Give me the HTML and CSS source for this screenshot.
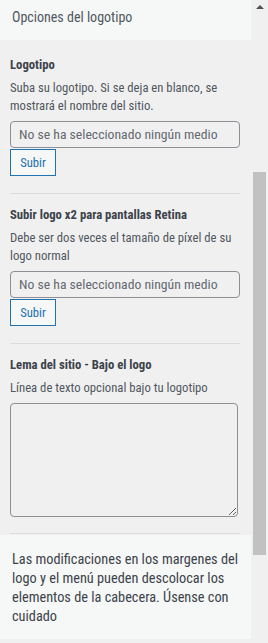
FILE: index.html
```html
<!DOCTYPE html>
<html lang="es">
<head>
<meta charset="utf-8">
<link rel="stylesheet" href="styles.css">
</head>
<body>
<div class="frame">
  <div class="panel">
    <div class="head">Opciones del logotipo</div>
    <div class="body">
      <div class="control">
        <div class="title">Logotipo</div>
        <div class="desc">Suba su logotipo. Si se deja en blanco, se mostrará el nombre del sitio.</div>
        <div class="media">No se ha seleccionado ningún medio</div>
        <button class="btn">Subir</button>
      </div>
      <div class="control">
        <div class="title">Subir logo x2 para pantallas Retina</div>
        <div class="desc">Debe ser dos veces el tamaño de píxel de su logo normal</div>
        <div class="media">No se ha seleccionado ningún medio</div>
        <button class="btn">Subir</button>
      </div>
      <div class="control last">
        <div class="title">Lema del sitio - Bajo el logo</div>
        <div class="desc">Línea de texto opcional bajo tu logotipo</div>
        <textarea class="area"></textarea>
      </div>
    </div>
    <div class="note">Las modificaciones en los margenes del logo y el menú pueden descolocar los elementos de la cabecera. Úsense con cuidado</div>
  </div>
  <div class="scrollbar">
    <div class="arrow"></div>
    <div class="thumb"></div>
  </div>
</div>
</body>
</html>
```

FILE: styles.css
```css
* { box-sizing: border-box; }
html, body { margin: 0; padding: 0; }
body {
  width: 268px;
  height: 643px;
  overflow: hidden;
  background: #f0f0f1;
  font-family: "Roboto Condensed", Lato, sans-serif;
  color: #50575e;
}
.frame { display: flex; height: 643px; }
.panel { width: 251px; flex-shrink: 0; }
.head {
  height: 40px;
  background: #f6f7f7;
  padding: 8px 12px 0;
  font-size: 14px;
  line-height: 18px;
  color: #50575e;
}
.body { padding: 4px 11px 0 10px; }
.control {
  padding: 12px 0 17px;
  border-bottom: 1px solid #dcdcde;
}
.control.last { padding-bottom: 16px; }
.title {
  font-size: 12.7px;
  font-weight: 700;
  line-height: 18px;
  color: #3c434a;
  margin-bottom: 5px;
}
.desc {
  font-size: 12.7px;
  line-height: 18px;
  color: #50575e;
  margin-bottom: 6px;
}
.media {
  width: 230px;
  height: 27px;
  border: 1px solid #8c8f94;
  border-radius: 4px;
  padding: 0 8px;
  font-size: 13.7px;
  line-height: 25px;
  color: #646970;
  white-space: nowrap;
  overflow: hidden;
  margin-bottom: 1px;
}
.btn {
  display: block;
  width: 46px;
  height: 27px;
  margin: 0;
  padding: 0;
  border: 1px solid #2271b1;
  border-radius: 0;
  background: #f6f7f7;
  color: #2271b1;
  font-family: inherit;
  font-size: 12.7px;
  line-height: 25px;
}
.area {
  display: block;
  width: 228px;
  height: 114px;
  margin: 1px 0 0;
  border: 1px solid #8c8f94;
  border-radius: 4px;
  background: transparent;
  font-family: inherit;
}
.note {
  margin-top: 1px;
  background: #f6f7f7;
  height: 104px;
  padding: 15px 8px 0 12px;
  font-size: 14.3px;
  line-height: 19px;
  color: #3c434a;
}
.scrollbar {
  width: 17px;
  background: #f0f0f0;
  position: relative;
}
.arrow {
  position: absolute;
  left: 5px;
  top: 5px;
  width: 0;
  height: 0;
  border-left: 4px solid transparent;
  border-right: 4px solid transparent;
  border-bottom: 4px solid #505050;
}
.thumb {
  position: absolute;
  left: 2px;
  top: 172px;
  width: 13px;
  height: 383px;
  background: #c1c1c1;
}
```
